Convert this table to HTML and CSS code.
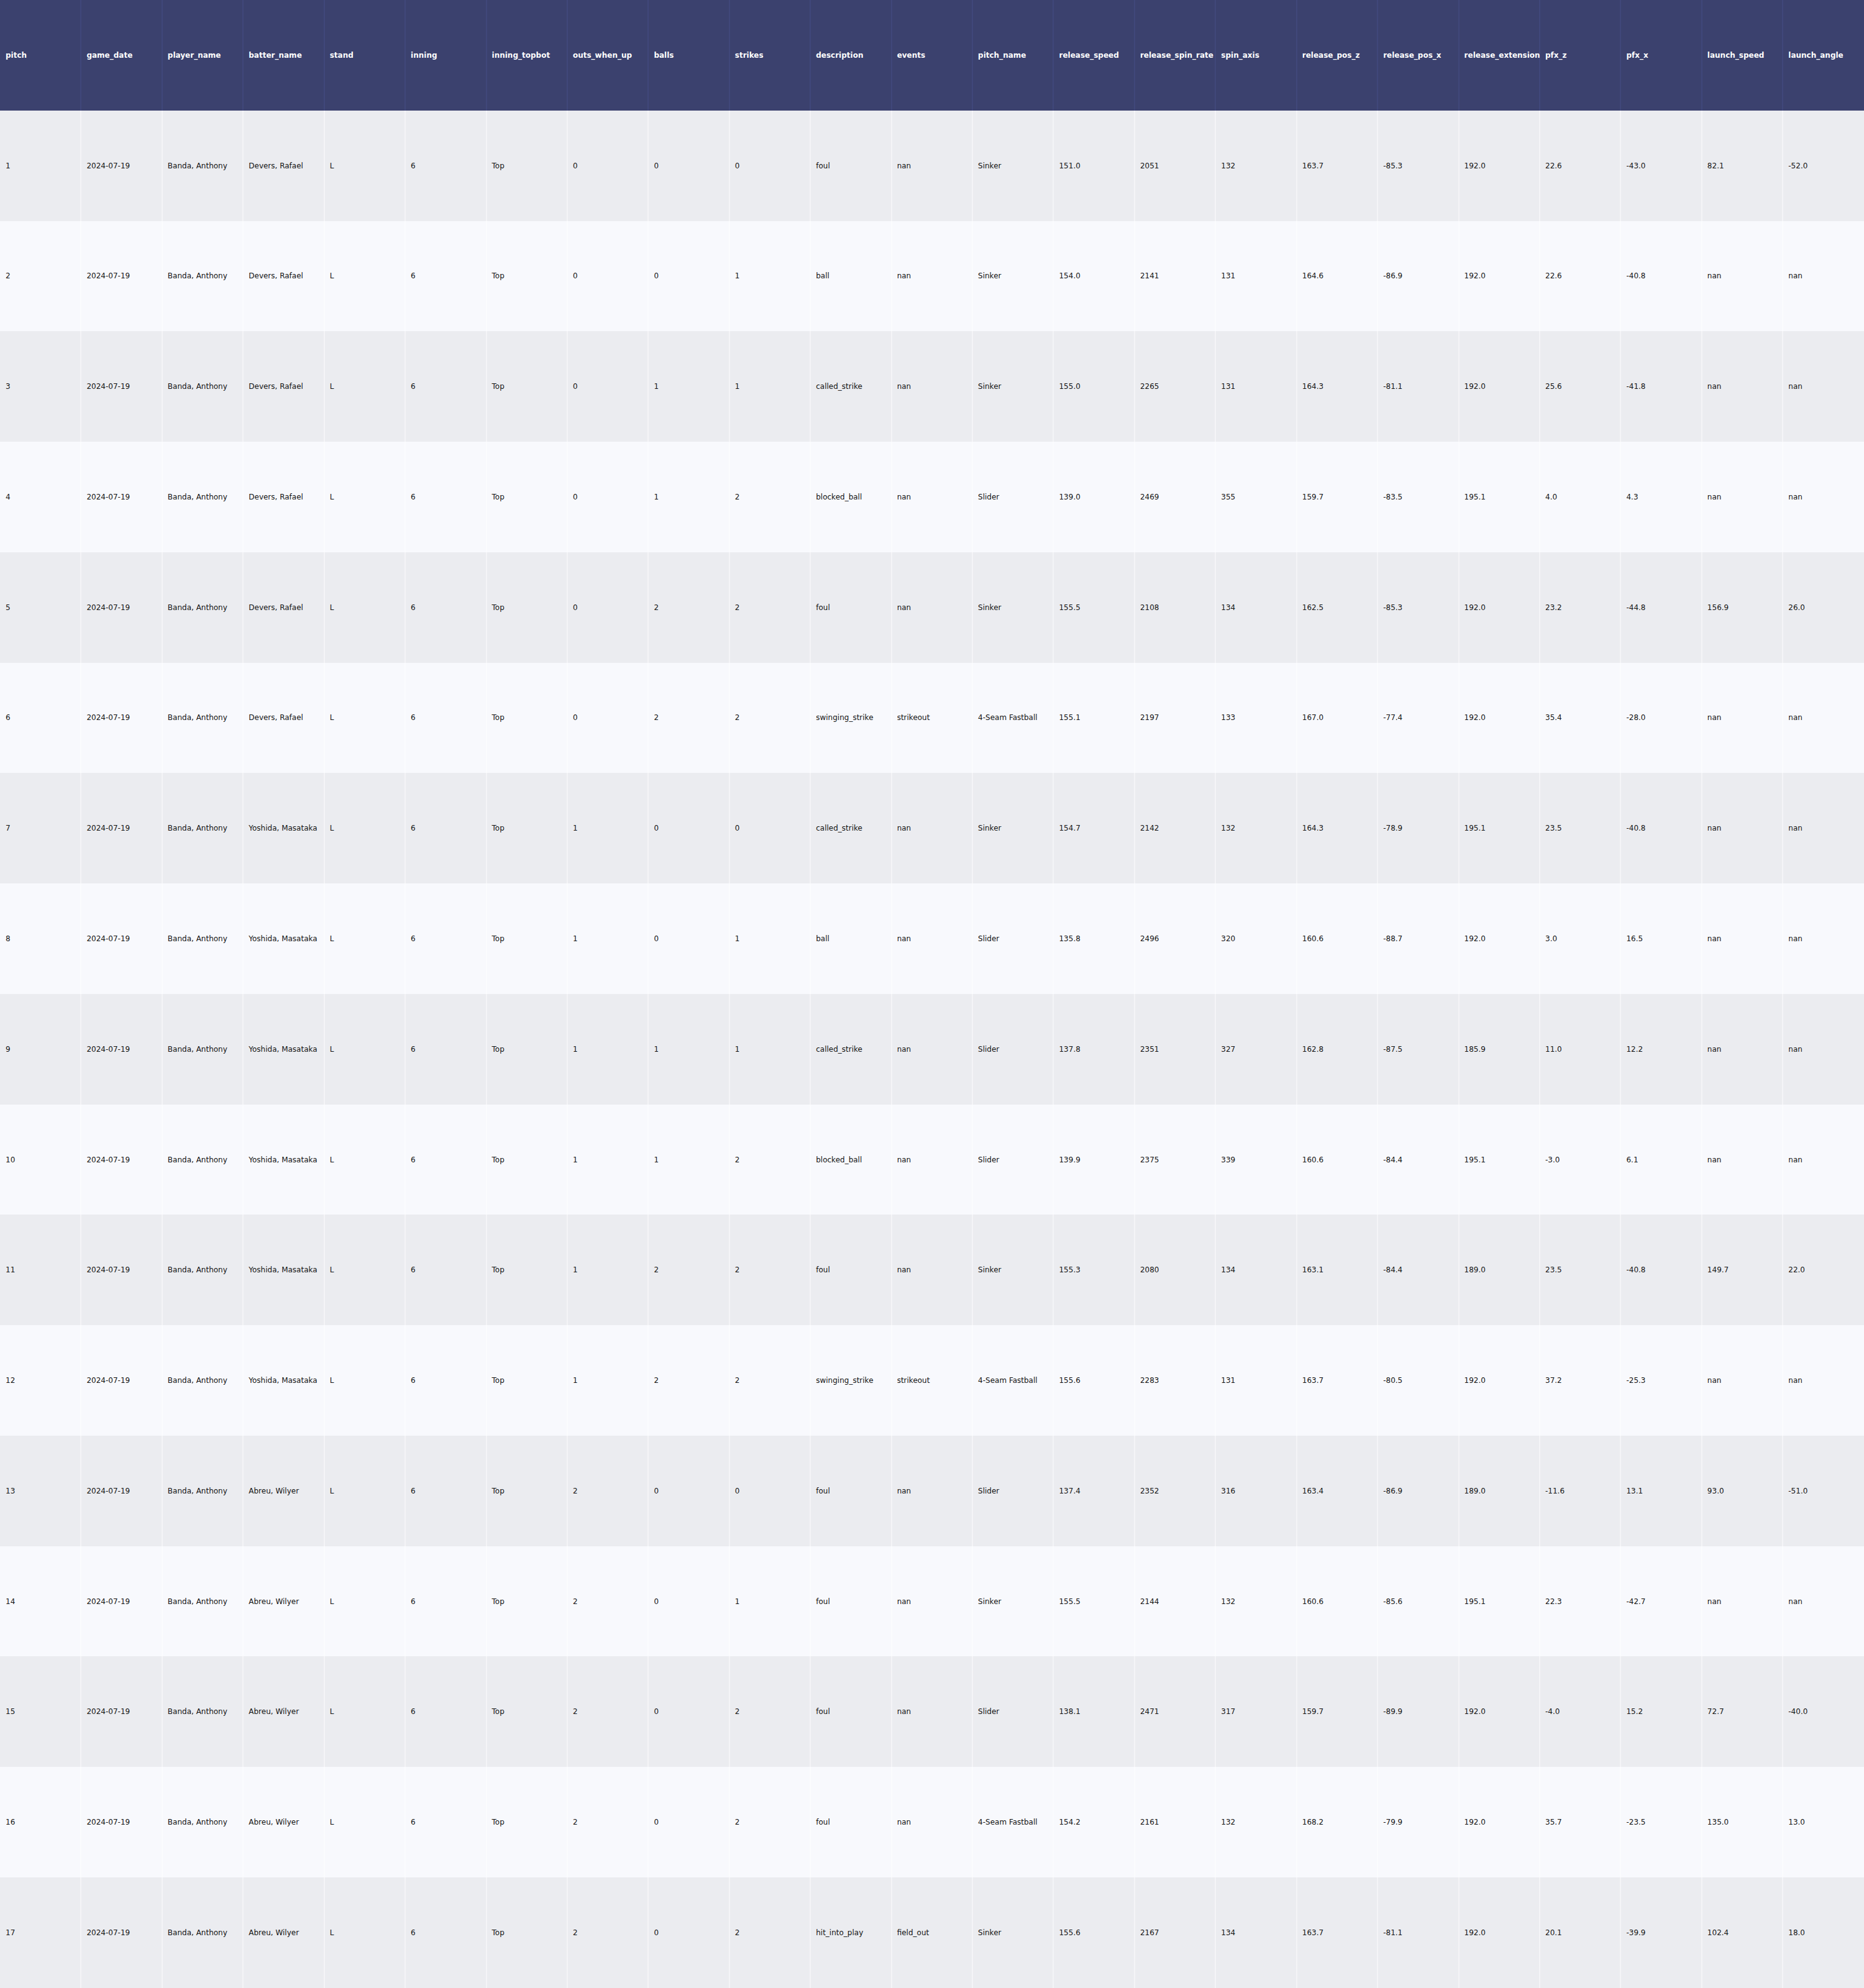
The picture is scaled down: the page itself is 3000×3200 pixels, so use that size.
FILE: index.html
```html
<!DOCTYPE html>
<html lang="en">
<head>
<meta charset="utf-8">
<title>Pitch data</title>
<link rel="stylesheet" href="styles.css">
</head>
<body>
<table class="grid">
<thead>
<tr class="head-row">
<th>pitch</th><th>game_date</th><th>player_name</th><th>batter_name</th><th>stand</th><th>inning</th><th>inning_topbot</th><th>outs_when_up</th><th>balls</th><th>strikes</th><th>description</th><th>events</th><th>pitch_name</th><th>release_speed</th><th>release_spin_rate</th><th>spin_axis</th><th>release_pos_z</th><th>release_pos_x</th><th>release_extension</th><th>pfx_z</th><th>pfx_x</th><th>launch_speed</th><th>launch_angle</th>
</tr>
</thead>
<tbody>
<tr><td>1</td><td>2024-07-19</td><td>Banda, Anthony</td><td>Devers, Rafael</td><td>L</td><td>6</td><td>Top</td><td>0</td><td>0</td><td>0</td><td>foul</td><td>nan</td><td>Sinker</td><td>151.0</td><td>2051</td><td>132</td><td>163.7</td><td>-85.3</td><td>192.0</td><td>22.6</td><td>-43.0</td><td>82.1</td><td>-52.0</td></tr>
<tr><td>2</td><td>2024-07-19</td><td>Banda, Anthony</td><td>Devers, Rafael</td><td>L</td><td>6</td><td>Top</td><td>0</td><td>0</td><td>1</td><td>ball</td><td>nan</td><td>Sinker</td><td>154.0</td><td>2141</td><td>131</td><td>164.6</td><td>-86.9</td><td>192.0</td><td>22.6</td><td>-40.8</td><td>nan</td><td>nan</td></tr>
<tr><td>3</td><td>2024-07-19</td><td>Banda, Anthony</td><td>Devers, Rafael</td><td>L</td><td>6</td><td>Top</td><td>0</td><td>1</td><td>1</td><td>called_strike</td><td>nan</td><td>Sinker</td><td>155.0</td><td>2265</td><td>131</td><td>164.3</td><td>-81.1</td><td>192.0</td><td>25.6</td><td>-41.8</td><td>nan</td><td>nan</td></tr>
<tr><td>4</td><td>2024-07-19</td><td>Banda, Anthony</td><td>Devers, Rafael</td><td>L</td><td>6</td><td>Top</td><td>0</td><td>1</td><td>2</td><td>blocked_ball</td><td>nan</td><td>Slider</td><td>139.0</td><td>2469</td><td>355</td><td>159.7</td><td>-83.5</td><td>195.1</td><td>4.0</td><td>4.3</td><td>nan</td><td>nan</td></tr>
<tr><td>5</td><td>2024-07-19</td><td>Banda, Anthony</td><td>Devers, Rafael</td><td>L</td><td>6</td><td>Top</td><td>0</td><td>2</td><td>2</td><td>foul</td><td>nan</td><td>Sinker</td><td>155.5</td><td>2108</td><td>134</td><td>162.5</td><td>-85.3</td><td>192.0</td><td>23.2</td><td>-44.8</td><td>156.9</td><td>26.0</td></tr>
<tr><td>6</td><td>2024-07-19</td><td>Banda, Anthony</td><td>Devers, Rafael</td><td>L</td><td>6</td><td>Top</td><td>0</td><td>2</td><td>2</td><td>swinging_strike</td><td>strikeout</td><td>4-Seam Fastball</td><td>155.1</td><td>2197</td><td>133</td><td>167.0</td><td>-77.4</td><td>192.0</td><td>35.4</td><td>-28.0</td><td>nan</td><td>nan</td></tr>
<tr><td>7</td><td>2024-07-19</td><td>Banda, Anthony</td><td>Yoshida, Masataka</td><td>L</td><td>6</td><td>Top</td><td>1</td><td>0</td><td>0</td><td>called_strike</td><td>nan</td><td>Sinker</td><td>154.7</td><td>2142</td><td>132</td><td>164.3</td><td>-78.9</td><td>195.1</td><td>23.5</td><td>-40.8</td><td>nan</td><td>nan</td></tr>
<tr><td>8</td><td>2024-07-19</td><td>Banda, Anthony</td><td>Yoshida, Masataka</td><td>L</td><td>6</td><td>Top</td><td>1</td><td>0</td><td>1</td><td>ball</td><td>nan</td><td>Slider</td><td>135.8</td><td>2496</td><td>320</td><td>160.6</td><td>-88.7</td><td>192.0</td><td>3.0</td><td>16.5</td><td>nan</td><td>nan</td></tr>
<tr><td>9</td><td>2024-07-19</td><td>Banda, Anthony</td><td>Yoshida, Masataka</td><td>L</td><td>6</td><td>Top</td><td>1</td><td>1</td><td>1</td><td>called_strike</td><td>nan</td><td>Slider</td><td>137.8</td><td>2351</td><td>327</td><td>162.8</td><td>-87.5</td><td>185.9</td><td>11.0</td><td>12.2</td><td>nan</td><td>nan</td></tr>
<tr><td>10</td><td>2024-07-19</td><td>Banda, Anthony</td><td>Yoshida, Masataka</td><td>L</td><td>6</td><td>Top</td><td>1</td><td>1</td><td>2</td><td>blocked_ball</td><td>nan</td><td>Slider</td><td>139.9</td><td>2375</td><td>339</td><td>160.6</td><td>-84.4</td><td>195.1</td><td>-3.0</td><td>6.1</td><td>nan</td><td>nan</td></tr>
<tr><td>11</td><td>2024-07-19</td><td>Banda, Anthony</td><td>Yoshida, Masataka</td><td>L</td><td>6</td><td>Top</td><td>1</td><td>2</td><td>2</td><td>foul</td><td>nan</td><td>Sinker</td><td>155.3</td><td>2080</td><td>134</td><td>163.1</td><td>-84.4</td><td>189.0</td><td>23.5</td><td>-40.8</td><td>149.7</td><td>22.0</td></tr>
<tr><td>12</td><td>2024-07-19</td><td>Banda, Anthony</td><td>Yoshida, Masataka</td><td>L</td><td>6</td><td>Top</td><td>1</td><td>2</td><td>2</td><td>swinging_strike</td><td>strikeout</td><td>4-Seam Fastball</td><td>155.6</td><td>2283</td><td>131</td><td>163.7</td><td>-80.5</td><td>192.0</td><td>37.2</td><td>-25.3</td><td>nan</td><td>nan</td></tr>
<tr><td>13</td><td>2024-07-19</td><td>Banda, Anthony</td><td>Abreu, Wilyer</td><td>L</td><td>6</td><td>Top</td><td>2</td><td>0</td><td>0</td><td>foul</td><td>nan</td><td>Slider</td><td>137.4</td><td>2352</td><td>316</td><td>163.4</td><td>-86.9</td><td>189.0</td><td>-11.6</td><td>13.1</td><td>93.0</td><td>-51.0</td></tr>
<tr><td>14</td><td>2024-07-19</td><td>Banda, Anthony</td><td>Abreu, Wilyer</td><td>L</td><td>6</td><td>Top</td><td>2</td><td>0</td><td>1</td><td>foul</td><td>nan</td><td>Sinker</td><td>155.5</td><td>2144</td><td>132</td><td>160.6</td><td>-85.6</td><td>195.1</td><td>22.3</td><td>-42.7</td><td>nan</td><td>nan</td></tr>
<tr><td>15</td><td>2024-07-19</td><td>Banda, Anthony</td><td>Abreu, Wilyer</td><td>L</td><td>6</td><td>Top</td><td>2</td><td>0</td><td>2</td><td>foul</td><td>nan</td><td>Slider</td><td>138.1</td><td>2471</td><td>317</td><td>159.7</td><td>-89.9</td><td>192.0</td><td>-4.0</td><td>15.2</td><td>72.7</td><td>-40.0</td></tr>
<tr><td>16</td><td>2024-07-19</td><td>Banda, Anthony</td><td>Abreu, Wilyer</td><td>L</td><td>6</td><td>Top</td><td>2</td><td>0</td><td>2</td><td>foul</td><td>nan</td><td>4-Seam Fastball</td><td>154.2</td><td>2161</td><td>132</td><td>168.2</td><td>-79.9</td><td>192.0</td><td>35.7</td><td>-23.5</td><td>135.0</td><td>13.0</td></tr>
<tr><td>17</td><td>2024-07-19</td><td>Banda, Anthony</td><td>Abreu, Wilyer</td><td>L</td><td>6</td><td>Top</td><td>2</td><td>0</td><td>2</td><td>hit_into_play</td><td>field_out</td><td>Sinker</td><td>155.6</td><td>2167</td><td>134</td><td>163.7</td><td>-81.1</td><td>192.0</td><td>20.1</td><td>-39.9</td><td>102.4</td><td>18.0</td></tr>
</tbody>
</table>
</body>
</html>
```

FILE: styles.css
```css
html, body {
  margin: 0;
  padding: 0;
  background: #f8f9fd;
}

.grid {
  width: 100%;
  height: 100vh;
  table-layout: fixed;
  border-collapse: collapse;
  font-family: "DejaVu Sans", Verdana, sans-serif;
  font-size: 12px;
}

.grid tr {
  height: 177.78px;
}

.grid th,
.grid td {
  padding: 0 0 0 8px;
  text-align: left;
  vertical-align: middle;
  white-space: nowrap;
  overflow: visible;
}

.grid th:first-child,
.grid td:first-child {
  padding-left: 9px;
}

.grid th {
  background: #3b416e;
  color: #ffffff;
  font-weight: bold;
  border-left: 2px solid #40477a;
}

.grid td {
  color: #141414;
  border-left: 2px solid rgba(255, 255, 255, 0.45);
}

.grid th:first-child,
.grid td:first-child {
  border-left: none;
}

.grid tbody tr:nth-child(odd) td {
  background: #ebecf0;
}

.grid tbody tr:nth-child(even) td {
  background: #f8f9fd;
}
```
